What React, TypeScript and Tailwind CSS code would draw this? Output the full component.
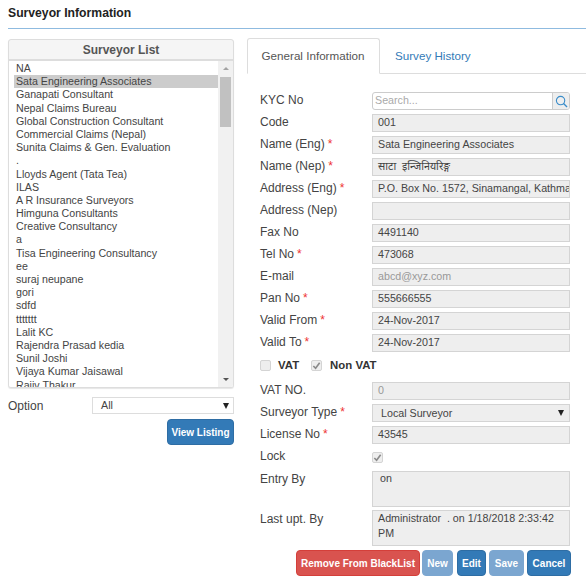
import React from "react";

const F = "font-['Liberation_Sans','Noto_Sans_Devanagari','Noto_Sans',sans-serif]";
const names = ["NA","Sata Engineering Associates","Ganapati Consultant","Nepal Claims Bureau","Global Construction Consultant","Commercial Claims (Nepal)","Sunita Claims & Gen. Evaluation",".","Lloyds Agent (Tata Tea)","ILAS","A R Insurance Surveyors","Himguna Consultants","Creative Consultancy","a","Tisa Engineering Consultancy","ee","suraj neupane","gori","sdfd","ttttttt","Lalit KC","Rajendra Prasad kedia","Sunil Joshi","Vijaya Kumar Jaisawal","Rajiv Thakur"];

function Star() {
  return <span className="text-[#e33] ml-[3px]">*</span>;
}
function Row({ label, req, children }: { label: string; req?: boolean; children: React.ReactNode }) {
  return (
    <div className="flex items-center h-[22px]">
      <div className="w-[112px] shrink-0 -mt-[2px] text-[12px] text-[#444]">{label}{req && <Star />}</div>
      {children}
    </div>
  );
}
function Box({ children, muted }: { children?: React.ReactNode; muted?: boolean }) {
  return (
    <div className={`w-[198px] h-[18px] bg-[#eeeeee] border border-[#d4d4d4] pl-[5px] text-[10.7px] leading-[15px] whitespace-nowrap overflow-hidden ${muted ? "text-[#999]" : "text-[#444]"}`}>{children}</div>
  );
}
function Check({ on }: { on?: boolean }) {
  return (
    <div className="w-[11px] h-[11px] rounded-[2px] border border-[#d4d4d4] bg-[#eeeeee] flex items-center justify-center shrink-0">
      {on && (
        <svg width="9" height="9" viewBox="0 0 10 10"><path d="M1.5 5.5 L4 8 L8.5 2" fill="none" stroke="#8a8a8a" strokeWidth="1.8" /></svg>
      )}
    </div>
  );
}
function Caret() {
  return <div className="w-0 h-0 border-x-[3.5px] border-x-transparent border-t-[6px] border-t-[#222]" />;
}
function Btn({ children, cls }: { children: React.ReactNode; cls: string }) {
  return <div className={`h-[26px] rounded-[4px] text-white font-bold text-[10px] whitespace-nowrap flex items-center justify-center border ${cls}`}>{children}</div>;
}

export default function App() {
  return (
    <div className={`${F} w-[586px] h-[580px] bg-white overflow-hidden relative`}>
      <div className="pl-[8px] h-[28px] pt-[5px] font-bold text-[12.2px] leading-[16px] text-[#222]">Surveyor Information</div>
      <div className="ml-[8px] h-[1px] bg-[#8fbbe0]" />
      <div className="flex pl-[8px] pt-[9px]">
        <div className="w-[226px] shrink-0 pt-[1px]">
          <div className="h-[349px] border border-[#ddd] rounded-[3px] bg-[#f5f5f5] shadow-[0_1px_1px_rgba(0,0,0,0.1)] flex flex-col overflow-hidden">
            <div className="h-[21px] shrink-0 flex items-center justify-center font-bold text-[12px] text-[#555] border-b-2 border-[#ddd]">Surveyor List</div>
            <div className="flex-1 bg-white flex overflow-hidden pl-[5px]">
              <div className="flex-1 overflow-hidden pt-[1px] text-[10.65px] leading-[13.2px] text-[#444]">
                {names.map((n, i) => (
                  <div key={i} className={`h-[13.2px] pl-[2px] whitespace-nowrap ${i === 1 ? "bg-[#cccccc]" : ""}`}>{n}</div>
                ))}
              </div>
              <div className="w-[15px] shrink-0 bg-[#f1f1f1] flex flex-col items-center">
                <div className="h-[15px] flex items-center justify-center"><div className="w-0 h-0 border-x-[3px] border-x-transparent border-b-[3px] border-b-[#a3a3a3]" /></div>
                <div className="w-[11px] h-[50px] bg-[#c1c1c1] mt-[1px]" />
                <div className="flex-1" />
                <div className="h-[15px] flex items-center justify-center"><div className="w-0 h-0 border-x-[3px] border-x-transparent border-t-[3px] border-t-[#555]" /></div>
              </div>
            </div>
          </div>
          <div className="flex items-center mt-[9px] h-[17px]">
            <div className="w-[84px] text-[12px] text-[#444]">Option</div>
            <div className="w-[142px] h-[17px] border border-[#ddd] flex items-center justify-between pl-[8px] pr-[4px] text-[10.7px] text-[#444]">All<Caret /></div>
          </div>
          <div className="flex justify-end mt-[5px]">
            <Btn cls="w-[67px] bg-[#337ab7] border-[#2e6da4]">View Listing</Btn>
          </div>
        </div>
        <div className="w-[339px] ml-[13px]">
          <div className="flex h-[36px] border-b border-[#ddd] text-[11.65px]">
            <div className="w-[133px] h-[36px] pr-[1px] border border-[#ddd] border-b-white rounded-t-[3px] bg-white text-[#555] flex items-center justify-center">General Information</div>
            <div className="ml-[15px] pt-[1px] flex items-center text-[#337ab7]">Survey History</div>
          </div>
          <div className="pl-[13px] pt-[16px]">
            <Row label="KYC No">
              <div className="w-[198px] h-[18px] border border-[#ccc] rounded-[3px] flex overflow-hidden">
                <div className="flex-1 pl-[2px] text-[10.7px] leading-[15px] text-[#aaa]">Search...</div>
                <div className="w-[17px] bg-[#eee] border-l border-[#ccc] flex items-center justify-center">
                  <svg width="13" height="13" viewBox="0 0 14 14"><circle cx="6" cy="6" r="4.5" fill="none" stroke="#3a8cc9" strokeWidth="1.2" /><path d="M9.2 9.2 L13 13" stroke="#3a8cc9" strokeWidth="1.4" /></svg>
                </div>
              </div>
            </Row>
            <Row label="Code"><Box>001</Box></Row>
            <Row label="Name (Eng)" req><Box>Sata Engineering Associates</Box></Row>
            <Row label="Name (Nep)" req><Box>साटा&nbsp;&nbsp;इन्जिनियरिङ्ग</Box></Row>
            <Row label="Address (Eng)" req><Box>P.O. Box No. 1572, Sinamangal, Kathmandu</Box></Row>
            <Row label="Address (Nep)"><Box /></Row>
            <Row label="Fax No"><Box>4491140</Box></Row>
            <Row label="Tel No" req><Box>473068</Box></Row>
            <Row label="E-mail"><Box muted>abcd@xyz.com</Box></Row>
            <Row label="Pan No" req><Box>555666555</Box></Row>
            <Row label="Valid From" req><Box>24-Nov-2017</Box></Row>
            <Row label="Valid To" req><Box>24-Nov-2017</Box></Row>
            <div className="flex items-center h-[22px] pt-[1px] mb-[4px] font-bold text-[11.4px] text-[#333]">
              <Check /><span className="ml-[7px]">VAT</span>
              <div className="ml-[12px]"><Check on /></div><span className="ml-[8px]">Non VAT</span>
            </div>
            <Row label="VAT NO."><Box muted>0</Box></Row>
            <Row label="Surveyor Type" req>
              <div className="w-[198px] h-[18px] bg-[#eeeeee] border border-[#d4d4d4] pl-[8px] pr-[5px] flex items-center justify-between text-[10.7px] text-[#444]">Local Surveyor<Caret /></div>
            </Row>
            <Row label="License No" req><Box>43545</Box></Row>
            <Row label="Lock"><Check on /></Row>
            <div className="flex items-start">
              <div className="w-[112px] shrink-0 pt-[2px] text-[12px] text-[#444]">Entry By</div>
              <div className="w-[198px] h-[36px] mt-[3px] bg-[#eeeeee] border border-[#d4d4d4] pl-[7px] text-[10.7px] leading-[13px] text-[#444]">on</div>
            </div>
            <div className="flex items-start">
              <div className="w-[112px] shrink-0 pt-[3px] text-[12px] text-[#444]">Last upt. By</div>
              <div className="w-[198px] h-[36px] mt-[3px] bg-[#eeeeee] border border-[#d4d4d4] pl-[5px] text-[10.7px] leading-[15px] text-[#444]">Administrator &nbsp;. on 1/18/2018 2:33:42 PM</div>
            </div>
            <div className="flex mt-[4px] -ml-[13px] pl-[49px]">
              <Btn cls="w-[124px] bg-[#d9534f] border-[#d43f3a]">Remove From BlackList</Btn>
              <Btn cls="w-[31px] ml-[2px] bg-[#7ba6d0] border-[#7ba6d0]">New</Btn>
              <Btn cls="w-[29px] ml-[4px] bg-[#337ab7] border-[#2e6da4]">Edit</Btn>
              <Btn cls="w-[35px] ml-[3px] bg-[#7ba6d0] border-[#7ba6d0]">Save</Btn>
              <Btn cls="w-[44px] ml-[3px] bg-[#337ab7] border-[#2e6da4]">Cancel</Btn>
            </div>
          </div>
        </div>
      </div>
    </div>
  );
}
